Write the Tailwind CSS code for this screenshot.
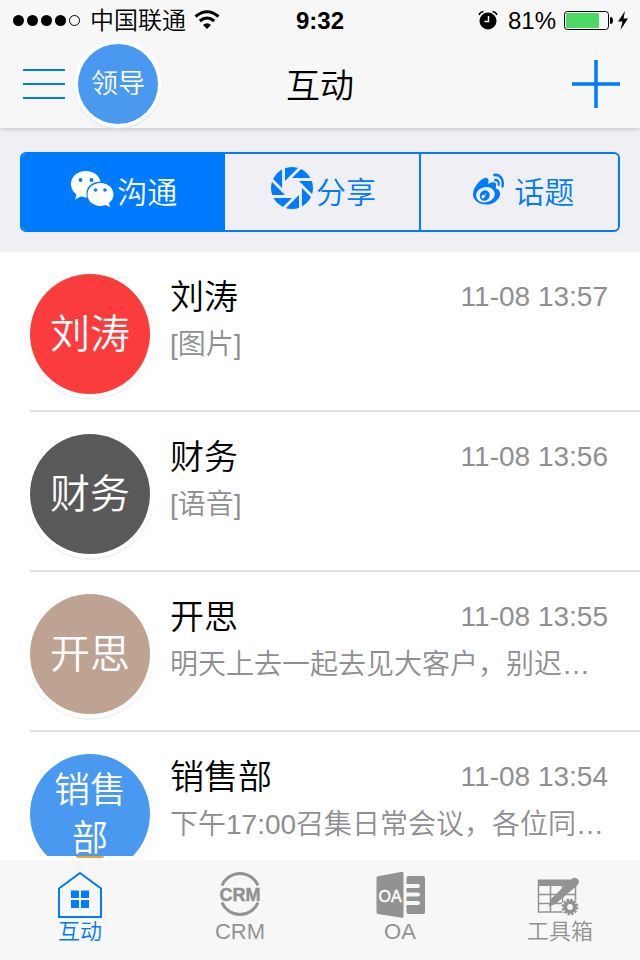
<!DOCTYPE html>
<html lang="zh-CN">
<head>
  <meta charset="UTF-8">
  <meta name="viewport" content="width=device-width, initial-scale=1.0">
  <title>互动</title>
  <script src="https://cdn.jsdelivr.net/npm/@tailwindcss/browser@4"></script>
</head>
<body class="h-screen flex flex-col overflow-hidden bg-white text-black font-[350] font-['Liberation_Sans','Noto_Sans_CJK_SC',sans-serif]">

  <!-- Header -->
  <header class="relative z-10 bg-[#f7f7f7] shadow-[0_1px_5px_rgba(0,0,0,0.2)]">
    <div class="grid grid-cols-3 items-center h-10 px-3 text-2xl">
      <div class="flex items-center">
        <svg class="w-17 h-4 shrink-0" viewBox="0 0 68 16">
          <circle cx="6.5" cy="8.5" r="5.5"/>
          <circle cx="20.5" cy="8.5" r="5.5"/>
          <circle cx="34.5" cy="8.5" r="5.5"/>
          <circle cx="48.5" cy="8.5" r="5.5"/>
          <circle cx="62.5" cy="8.5" r="5" fill="none" stroke="#000"/>
        </svg>
        <span class="ml-2.5 pt-0.5 whitespace-nowrap">中国联通</span>
        <svg class="ml-2 w-7 h-5 shrink-0" viewBox="0 0 28 20" fill="none" stroke="#000" stroke-width="3">
          <path d="M1.5 6.5Q13-3 24.5 6.5"/>
          <path d="M5.8 11Q13 5 20.2 11"/>
          <path d="M13 19L9 15Q13 11.5 17 15Z" fill="#000" stroke="none"/>
        </svg>
      </div>
      <span class="text-center font-bold pt-0.5">9:32</span>
      <div class="flex items-center justify-end">
        <svg class="w-5 h-5" viewBox="0 0 20 20">
          <circle cx="10" cy="11" r="8.5"/>
          <path d="M1 5Q2 2 5.5 1.5M19 5Q18 2 14.5 1.5" fill="none" stroke="#000" stroke-width="1.5"/>
          <path d="M10.5 6V11.5H6.5" fill="none" stroke="#fff" stroke-width="1.5"/>
        </svg>
        <span class="ml-2.5 pt-0.5">81%</span>
        <svg class="ml-2 w-16 h-5 shrink-0" viewBox="0 0 64 20">
          <rect x="0.5" y="1.5" width="44" height="18" rx="3" fill="none" stroke="#000"/>
          <rect x="2" y="3" width="33" height="15" rx="1" fill="#4cd964"/>
          <path d="M46 7Q49 7 49 10.5T46 14Z"/>
          <path d="M61 1L54 11.5H58.5L56.5 20L64 8.5H59.5Z"/>
        </svg>
      </div>
    </div>
    <div class="grid grid-cols-3 items-center h-22 px-5">
      <div class="flex items-center">
        <button type="button" aria-label="菜单" class="ml-[3px]">
          <svg class="w-[43px] h-8" viewBox="0 0 43 32" stroke="#007aff" stroke-width="2"><path d="M0 2H42M0 16H42M0 30H42"/></svg>
        </button>
        <button type="button" class="ml-3 size-20 shrink-0 rounded-full bg-[#4899ef] text-[27px] text-white shadow-[0_0_0_4px_#fff,0_1px_1px_4px_#ddd]">领导</button>
      </div>
      <h1 class="text-center text-[34px] pt-1">互动</h1>
      <button type="button" aria-label="添加" class="justify-self-end">
        <svg class="size-12" viewBox="0 0 48 48" stroke="#007aff" stroke-width="3.5"><path d="M0 24H48M24 0V48"/></svg>
      </button>
    </div>
  </header>

  <!-- Segment -->
  <div class="bg-[#efeff4] px-5 pt-6 pb-5">
    <div class="grid grid-cols-[34fr_33fr_33fr] h-20 rounded-md border-2 border-[#007aff] overflow-hidden text-[30px] text-[#007aff]">
      <button type="button" class="flex items-center justify-center bg-[#007aff] text-white">
        <svg class="w-12 h-10 mb-1" viewBox="0 0 48 40" fill="currentColor">
          <path d="M17 1C8 1 2 6.8 2 14.2C2 18.5 4.2 22 7.5 24.5L6 29.5L11.8 26.6Q14 27.4 17 27.4H18C15.5 18 22 12 31.5 11.5C30 5 24 1 17 1Z"/>
          <path d="M31.5 13C24 13 18.5 18 18.5 24.5S24 36 31.5 36Q34 36 36.5 35L41 37L40 33Q44.5 29.5 44.5 24.5C44.5 18 39 13 31.5 13Z"/>
          <g fill="#007aff"><circle cx="11.5" cy="10" r="1.9"/><circle cx="22.5" cy="10" r="1.9"/><circle cx="26.5" cy="20" r="1.8"/><circle cx="36" cy="20" r="1.8"/></g>
        </svg>
        沟通
      </button>
      <button type="button" class="flex items-center justify-center border-r-2 border-[#007aff]">
        <svg class="w-12 h-11 mb-2" viewBox="-24 -22 48 44" fill="#007aff">
          <clipPath id="lens"><circle r="21"/></clipPath>
          <g clip-path="url(#lens)">
            <path id="blade" d="M-7-7V-30H16Z"/>
            <use href="#blade" transform="rotate(45)"/>
            <use href="#blade" transform="rotate(90)"/>
            <use href="#blade" transform="rotate(135)"/>
            <use href="#blade" transform="rotate(180)"/>
            <use href="#blade" transform="rotate(225)"/>
            <use href="#blade" transform="rotate(270)"/>
            <use href="#blade" transform="rotate(315)"/>
          </g>
        </svg>
        分享
      </button>
      <button type="button" class="flex items-center justify-center gap-2.5 pl-2">
        <svg class="w-[31px] h-8 mb-1.5" viewBox="0 2 24 20" preserveAspectRatio="none" fill="#007aff">
          <path d="M10.098 20.323c-3.977.391-7.414-1.406-7.672-4.02-.259-2.609 2.759-5.047 6.74-5.441 3.979-.394 7.413 1.404 7.671 4.018.259 2.6-2.759 5.049-6.737 5.439l-.002.004zM9.05 17.219c-.384.616-1.208.884-1.829.602-.612-.279-.793-.991-.406-1.593.379-.595 1.176-.861 1.793-.601.622.263.82.972.442 1.592zm1.27-1.627c-.141.237-.449.353-.689.253-.236-.09-.313-.361-.177-.586.138-.227.436-.346.672-.24.239.09.315.36.18.601l.014-.028zm.176-2.719c-1.893-.493-4.033.45-4.857 2.118-.836 1.704-.026 3.591 1.886 4.21 1.983.64 4.318-.341 5.132-2.179.8-1.793-.201-3.642-2.161-4.149zm7.563-1.224c-.346-.105-.57-.18-.405-.615.375-.977.42-1.804 0-2.404-.781-1.112-2.915-1.053-5.364-.03 0 0-.766.331-.571-.271.376-1.217.315-2.224-.27-2.809-1.338-1.337-4.869.045-7.888 3.08C1.309 10.87 0 13.273 0 15.348c0 3.981 5.099 6.395 10.086 6.395 6.536 0 10.888-3.801 10.888-6.82 0-1.822-1.547-2.854-2.915-3.284v.01zm1.908-5.092c-.766-.856-1.908-1.187-2.96-.962-.436.09-.706.511-.616.932.09.42.511.691.932.602.511-.105 1.067.044 1.442.465.376.421.466.977.316 1.473-.136.406.089.856.51.992.405.119.857-.105.992-.512.33-1.021.12-2.178-.646-3.035l.03.045zm2.418-2.195c-1.576-1.757-3.905-2.419-6.054-1.968-.496.104-.812.587-.706 1.081.104.496.586.813 1.082.707 1.532-.331 3.185.15 4.296 1.383 1.112 1.246 1.429 2.943.947 4.416-.165.48.106 1.007.586 1.157.479.165.991-.104 1.157-.586.675-2.088.241-4.478-1.338-6.235l.03.045z"/>
        </svg>
        话题
      </button>
    </div>
  </div>

  <!-- Chat list -->
  <ul class="flex-1 min-h-0 overflow-hidden">
    <li class="flex h-40 ml-7.5 border-b-2 border-[#e3e3e5]">
      <div class="mt-5.5 size-30 shrink-0 rounded-full bg-[#fa3c3c] flex items-center justify-center text-[40px] text-white shadow-[0_0_0_4px_#fff,0_2px_0_4px_#f3f3f3]">刘涛</div>
      <div class="flex-1 min-w-0 ml-5 mr-8 pt-[21px]">
        <div class="flex items-center justify-between"><h2 class="text-[34px] leading-12">刘涛</h2><time class="text-[28px] text-[#8e8e93]">11-08 13:57</time></div>
        <p class="truncate text-[28px] leading-12 text-[#8e8e93]">[图片]</p>
      </div>
    </li>
    <li class="flex h-40 ml-7.5 border-b-2 border-[#e3e3e5]">
      <div class="mt-5.5 size-30 shrink-0 rounded-full bg-[#595959] flex items-center justify-center text-[40px] text-white shadow-[0_0_0_4px_#fff,0_2px_0_4px_#f3f3f3]">财务</div>
      <div class="flex-1 min-w-0 ml-5 mr-8 pt-[21px]">
        <div class="flex items-center justify-between"><h2 class="text-[34px] leading-12">财务</h2><time class="text-[28px] text-[#8e8e93]">11-08 13:56</time></div>
        <p class="truncate text-[28px] leading-12 text-[#8e8e93]">[语音]</p>
      </div>
    </li>
    <li class="flex h-40 ml-7.5 border-b-2 border-[#e3e3e5]">
      <div class="mt-5.5 size-30 shrink-0 rounded-full bg-[#bea392] flex items-center justify-center text-[40px] text-white shadow-[0_0_0_4px_#fff,0_2px_0_4px_#f3f3f3]">开思</div>
      <div class="flex-1 min-w-0 ml-5 mr-8 pt-[21px]">
        <div class="flex items-center justify-between"><h2 class="text-[34px] leading-12">开思</h2><time class="text-[28px] text-[#8e8e93]">11-08 13:55</time></div>
        <p class="truncate text-[28px] leading-12 text-[#8e8e93]">明天上去一起去见大客户，别迟…</p>
      </div>
    </li>
    <li class="flex h-40 ml-7.5">
      <div class="mt-5.5 w-30 shrink-0">
        <div class="h-[102px] -mx-2 px-2 overflow-hidden">
          <div class="size-30 rounded-full bg-[#4899ef] flex items-center justify-center px-5 pt-0.5 text-center text-[36px] leading-12 text-white shadow-[0_0_0_4px_#fff,0_2px_0_4px_#f3f3f3]">销售部</div>
        </div>
        <div class="mx-auto h-0.5 w-7 rounded-b-full bg-[#f0a030]"></div>
      </div>
      <div class="flex-1 min-w-0 ml-5 mr-8 pt-[21px]">
        <div class="flex items-center justify-between"><h2 class="text-[34px] leading-12">销售部</h2><time class="text-[28px] text-[#8e8e93]">11-08 13:54</time></div>
        <p class="truncate text-[28px] leading-12 text-[#8e8e93]">下午17:00召集日常会议，各位同…</p>
      </div>
    </li>
  </ul>

  <!-- Tab bar -->
  <nav class="grid grid-cols-4 h-25 bg-[#f7f7f7] text-[22px] leading-7 text-[#929292]">
    <a href="#" class="flex flex-col items-center pt-2.5 text-[#007aff]">
      <svg class="w-[50px] h-12" viewBox="0 0 50 48" fill="currentColor">
        <path d="M25 3L46 18.5V47H4V18.5Z" fill="none" stroke="currentColor" stroke-width="2"/>
        <path d="M16 20.5h8v7.5h-8zM26 20.5h8v7.5h-8zM16 30h8v8h-8zM26 30h8v8h-8z"/>
      </svg>
      互动
    </a>
    <a href="#" class="flex flex-col items-center pt-2.5">
      <svg class="w-[50px] h-12" viewBox="0 0 50 48" fill="currentColor">
        <path d="M7 15.5A19.5 19.5 0 0 1 43 15.5M7 32.5A19.5 19.5 0 0 0 43 32.5" fill="none" stroke="currentColor" stroke-width="3"/>
        <text x="25" y="30.5" text-anchor="middle" font-size="18" font-weight="700" stroke="currentColor" stroke-width="0.5">CRM</text>
      </svg>
      CRM
    </a>
    <a href="#" class="flex flex-col items-center pt-2.5">
      <svg class="w-[50px] h-12" viewBox="0 0 50 48" fill="currentColor">
        <path d="M3 6.3L27 1.8Q28.5 1.6 28.5 3V46.5Q28.5 48 27 47.7L3 44Q1.5 43.7 1.5 42V8Q1.5 6.6 3 6.3Z"/>
        <rect x="31.500" y="6" width="18.5" height="38" rx="2"/>
        <path d="M31 16H43M31 24.5H43M31 33H43" stroke="#f7f7f7" stroke-width="4" stroke-linecap="round"/>
        <text x="15" y="31.5" text-anchor="middle" font-size="16" fill="#fff" stroke="#fff" stroke-width="0.4">OA</text>
      </svg>
      OA
    </a>
    <a href="#" class="flex flex-col items-center pt-2.5">
      <svg class="w-[50px] h-12" viewBox="0 0 50 48" fill="currentColor">
        <path d="M3 9.5H41V16H3Z"/>
        <path d="M3.5 10V42H40.500V10M15.5 16V42M27.5 16V42M3 24.5H41M3 33.5H41" fill="none" stroke="currentColor" stroke-width="1.5"/>
        <path d="M13.5 37L16 29L35 10.500Q39 6 42.5 9T41.5 16L21 33.500Z"/>
        <circle cx="35" cy="37" r="9" fill="#f7f7f7"/>
        <circle cx="35" cy="37" r="7" fill="none" stroke="currentColor" stroke-width="2.5" stroke-dasharray="2.4 1.265"/>
        <circle cx="35" cy="37" r="4.7" fill="none" stroke="currentColor" stroke-width="3.6"/>
      </svg>
      工具箱
    </a>
  </nav>
</body>
</html>
